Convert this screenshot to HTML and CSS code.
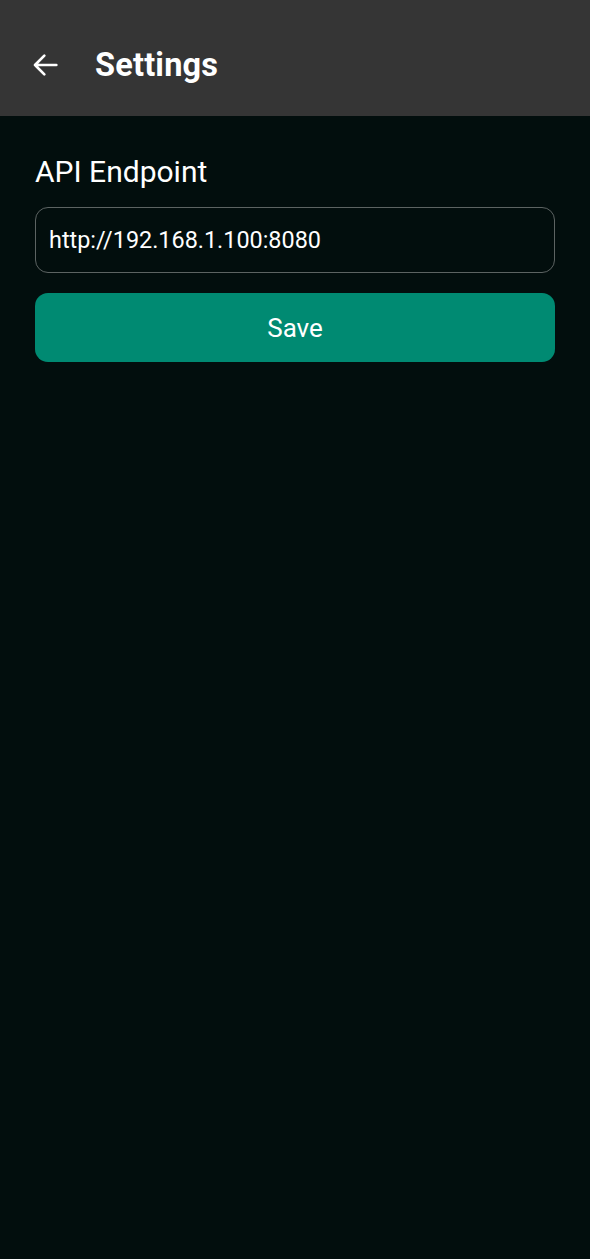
FILE: index.html
```html
<!DOCTYPE html>
<html>
<head>
<meta charset="utf-8">
<link rel="stylesheet" href="styles.css">
</head>
<body>
<div class="app">
  <header class="topbar">
    <span class="back" aria-label="Back">
      <svg width="32" height="32" viewBox="0 0 24 24"><path d="M20.5 12H4.5M11.5 5L4.5 12l7 7" fill="none" stroke="#fff" stroke-width="2" stroke-linecap="round" stroke-linejoin="round"/></svg>
    </span>
    <h1 class="title">Settings</h1>
  </header>
  <main class="content">
    <label class="label">API Endpoint</label>
    <div class="field">http://192.168.1.100:8080</div>
    <button class="save">Save</button>
  </main>
</div>
</body>
</html>
```
FILE: styles.css
```css
html, body {
  margin: 0;
  padding: 0;
  background: #020e0d;
}
.app {
  width: 590px;
  height: 1259px;
  background: #020e0d;
  font-family: Roboto, "Noto Sans", sans-serif;
  color: #fff;
  display: flex;
  flex-direction: column;
}
.topbar {
  height: 116px;
  background: #353535;
  display: flex;
  align-items: center;
  padding: 14px 0 0 29px;
  box-sizing: border-box;
  gap: 34px;
}
.back {
  display: flex;
  width: 32px;
  height: 32px;
}
.title {
  margin: 0;
  font-size: 32.5px;
  font-weight: 700;
  letter-spacing: 0.2px;
}
.content {
  padding: 38px 35px 0 35px;
  display: flex;
  flex-direction: column;
}
.label {
  font-size: 30px;
  line-height: 36px;
  color: #fff;
  margin-bottom: 17px;
}
.field {
  height: 66px;
  box-sizing: border-box;
  border: 1.5px solid #5c6362;
  border-radius: 13px;
  display: flex;
  align-items: center;
  padding-left: 13px;
  font-size: 23.4px;
  color: #fff;
  margin-bottom: 20px;
}
.save {
  height: 69px;
  border: none;
  border-radius: 13px;
  background: #008a72;
  color: #fff;
  font-family: Roboto, "Noto Sans", sans-serif;
  font-size: 26px;
  padding: 0;
}
```
